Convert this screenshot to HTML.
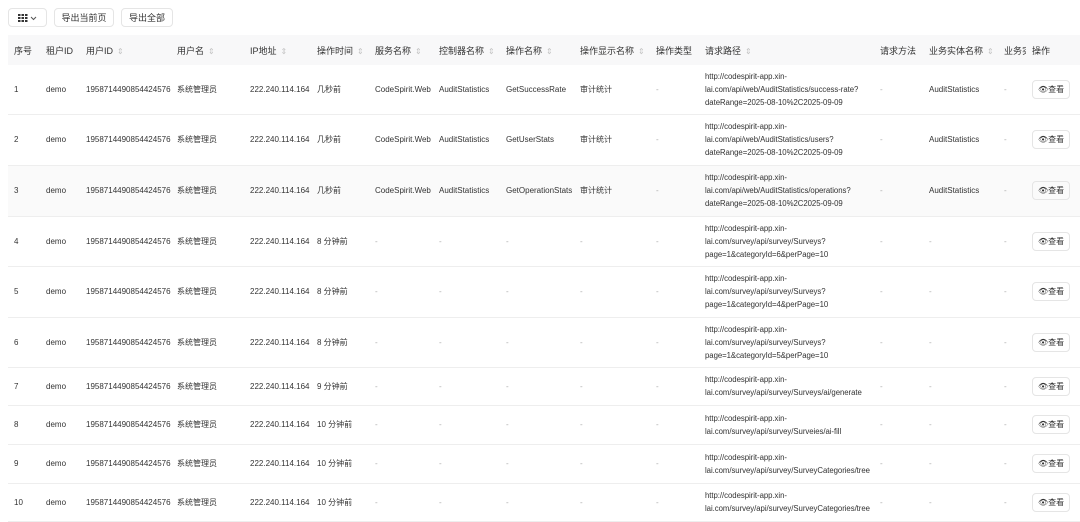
<!DOCTYPE html><html><head><meta charset="utf-8"><style>
body{margin:0;width:1080px;height:521px;overflow:hidden;background:#fff;font-family:"Liberation Sans","Noto Sans CJK SC",sans-serif;color:#333}
.tb{position:absolute;top:8px;height:19px;border:1px solid #e5e5e5;border-radius:4px;font-size:9px;line-height:19px;box-sizing:border-box;text-align:center;color:#333}
table{position:absolute;left:8px;top:35px;border-collapse:collapse;table-layout:fixed;width:1072px;font-size:8px}
th{background:#f8f8f9;height:30px;font-weight:normal;text-align:left;padding:0 0 0 6px;font-size:9px;color:#333;white-space:nowrap;overflow:hidden}
td{padding:0 0 0 6px;border-bottom:1px solid #eee;white-space:nowrap;overflow:hidden;line-height:13px}
td.p{font-size:7.8px;letter-spacing:-0.05px}
.s{color:#c4c4c4;font-size:8px;margin-left:4px}
.d{color:#aaa}
td.f,th.f{box-shadow:-4px 0 5px -2px rgba(0,0,0,.08);background:#fff}
th.f{background:#f8f8f9}
.b{display:inline-block;border:1px solid #e5e5e5;border-radius:4px;height:17px;line-height:17px;padding:0 5px;font-size:8px;color:#333}
tr.h td{background:#fafafa}
</style></head><body>
<div class="tb" style="left:8px;width:39px"><svg width="10" height="8" viewBox="0 0 10 8" style="vertical-align:-1px"><g fill="#333"><rect x="0" y="0" width="2.5" height="2"/><rect x="3.5" y="0" width="2.5" height="2"/><rect x="7" y="0" width="2.5" height="2"/><rect x="0" y="3" width="2.5" height="2"/><rect x="3.5" y="3" width="2.5" height="2"/><rect x="7" y="3" width="2.5" height="2"/><rect x="0" y="6" width="2.5" height="2"/><rect x="3.5" y="6" width="2.5" height="2"/><rect x="7" y="6" width="2.5" height="2"/></g></svg> <svg width="7" height="5" viewBox="0 0 7 5"><path d="M1 1l2.5 2.5L6 1" stroke="#555" fill="none"/></svg></div>
<div class="tb" style="left:54px;width:60px">导出当前页</div>
<div class="tb" style="left:121px;width:52px">导出全部</div>
<table>
<colgroup><col style="width:32px"><col style="width:40px"><col style="width:91px"><col style="width:73px"><col style="width:67px"><col style="width:58px"><col style="width:64px"><col style="width:67px"><col style="width:74px"><col style="width:76px"><col style="width:49px"><col style="width:175px"><col style="width:49px"><col style="width:75px"><col style="width:28px"><col style="width:54px"></colgroup>
<tr><th>序号</th><th>租户ID</th><th>用户ID<span class="s">⇕</span></th><th>用户名<span class="s">⇕</span></th><th>IP地址<span class="s">⇕</span></th><th>操作时间<span class="s">⇕</span></th><th>服务名称<span class="s">⇕</span></th><th>控制器名称<span class="s">⇕</span></th><th>操作名称<span class="s">⇕</span></th><th>操作显示名称<span class="s">⇕</span></th><th>操作类型</th><th>请求路径<span class="s">⇕</span></th><th>请求方法</th><th>业务实体名称<span class="s">⇕</span></th><th>业务实</th><th class="f">操作</th></tr>
<tr style="height:49px"><td>1</td><td>demo</td><td>1958714490854424576</td><td>系统管理员</td><td>222.240.114.164</td><td>几秒前</td><td>CodeSpirit.Web</td><td>AuditStatistics</td><td>GetSuccessRate</td><td>审计统计</td><td class="d">-</td><td class="p">http://codespirit-app.xin-<br>lai.com/api/web/AuditStatistics/success-rate?<br>dateRange=2025-08-10%2C2025-09-09</td><td class="d">-</td><td>AuditStatistics</td><td class="d">-</td><td class="f"><span class="b">👁查看</span></td></tr>
<tr style="height:51px"><td>2</td><td>demo</td><td>1958714490854424576</td><td>系统管理员</td><td>222.240.114.164</td><td>几秒前</td><td>CodeSpirit.Web</td><td>AuditStatistics</td><td>GetUserStats</td><td>审计统计</td><td class="d">-</td><td class="p">http://codespirit-app.xin-<br>lai.com/api/web/AuditStatistics/users?<br>dateRange=2025-08-10%2C2025-09-09</td><td class="d">-</td><td>AuditStatistics</td><td class="d">-</td><td class="f"><span class="b">👁查看</span></td></tr>
<tr class="h" style="height:51px"><td>3</td><td>demo</td><td>1958714490854424576</td><td>系统管理员</td><td>222.240.114.164</td><td>几秒前</td><td>CodeSpirit.Web</td><td>AuditStatistics</td><td>GetOperationStats</td><td>审计统计</td><td class="d">-</td><td class="p">http://codespirit-app.xin-<br>lai.com/api/web/AuditStatistics/operations?<br>dateRange=2025-08-10%2C2025-09-09</td><td class="d">-</td><td>AuditStatistics</td><td class="d">-</td><td class="f"><span class="b">👁查看</span></td></tr>
<tr style="height:50px"><td>4</td><td>demo</td><td>1958714490854424576</td><td>系统管理员</td><td>222.240.114.164</td><td>8 分钟前</td><td class="d">-</td><td class="d">-</td><td class="d">-</td><td class="d">-</td><td class="d">-</td><td class="p">http://codespirit-app.xin-<br>lai.com/survey/api/survey/Surveys?<br>page=1&amp;categoryId=6&amp;perPage=10</td><td class="d">-</td><td class="d">-</td><td class="d">-</td><td class="f"><span class="b">👁查看</span></td></tr>
<tr style="height:51px"><td>5</td><td>demo</td><td>1958714490854424576</td><td>系统管理员</td><td>222.240.114.164</td><td>8 分钟前</td><td class="d">-</td><td class="d">-</td><td class="d">-</td><td class="d">-</td><td class="d">-</td><td class="p">http://codespirit-app.xin-<br>lai.com/survey/api/survey/Surveys?<br>page=1&amp;categoryId=4&amp;perPage=10</td><td class="d">-</td><td class="d">-</td><td class="d">-</td><td class="f"><span class="b">👁查看</span></td></tr>
<tr style="height:50px"><td>6</td><td>demo</td><td>1958714490854424576</td><td>系统管理员</td><td>222.240.114.164</td><td>8 分钟前</td><td class="d">-</td><td class="d">-</td><td class="d">-</td><td class="d">-</td><td class="d">-</td><td class="p">http://codespirit-app.xin-<br>lai.com/survey/api/survey/Surveys?<br>page=1&amp;categoryId=5&amp;perPage=10</td><td class="d">-</td><td class="d">-</td><td class="d">-</td><td class="f"><span class="b">👁查看</span></td></tr>
<tr style="height:38px"><td>7</td><td>demo</td><td>1958714490854424576</td><td>系统管理员</td><td>222.240.114.164</td><td>9 分钟前</td><td class="d">-</td><td class="d">-</td><td class="d">-</td><td class="d">-</td><td class="d">-</td><td class="p">http://codespirit-app.xin-<br>lai.com/survey/api/survey/Surveys/ai/generate</td><td class="d">-</td><td class="d">-</td><td class="d">-</td><td class="f"><span class="b">👁查看</span></td></tr>
<tr style="height:39px"><td>8</td><td>demo</td><td>1958714490854424576</td><td>系统管理员</td><td>222.240.114.164</td><td>10 分钟前</td><td class="d">-</td><td class="d">-</td><td class="d">-</td><td class="d">-</td><td class="d">-</td><td class="p">http://codespirit-app.xin-<br>lai.com/survey/api/survey/Surveies/ai-fill</td><td class="d">-</td><td class="d">-</td><td class="d">-</td><td class="f"><span class="b">👁查看</span></td></tr>
<tr style="height:39px"><td>9</td><td>demo</td><td>1958714490854424576</td><td>系统管理员</td><td>222.240.114.164</td><td>10 分钟前</td><td class="d">-</td><td class="d">-</td><td class="d">-</td><td class="d">-</td><td class="d">-</td><td class="p">http://codespirit-app.xin-<br>lai.com/survey/api/survey/SurveyCategories/tree</td><td class="d">-</td><td class="d">-</td><td class="d">-</td><td class="f"><span class="b">👁查看</span></td></tr>
<tr style="height:38px"><td>10</td><td>demo</td><td>1958714490854424576</td><td>系统管理员</td><td>222.240.114.164</td><td>10 分钟前</td><td class="d">-</td><td class="d">-</td><td class="d">-</td><td class="d">-</td><td class="d">-</td><td class="p">http://codespirit-app.xin-<br>lai.com/survey/api/survey/SurveyCategories/tree</td><td class="d">-</td><td class="d">-</td><td class="d">-</td><td class="f"><span class="b">👁查看</span></td></tr>
</table>
</body></html>
